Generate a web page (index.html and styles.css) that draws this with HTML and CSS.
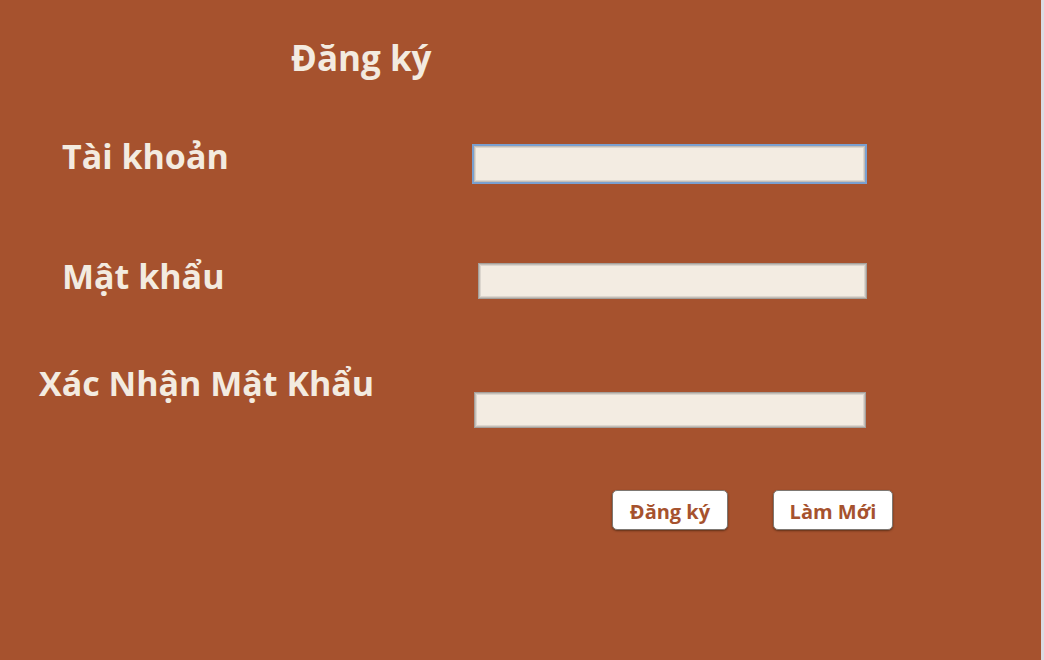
FILE: index.html
```html
<!DOCTYPE html>
<html lang="vi">
<head>
<meta charset="utf-8">
<title>Đăng ký</title>
<link rel="stylesheet" href="styles.css">
</head>
<body>
<main class="page">
  <h1 class="title">Đăng ký</h1>
  <div class="row row-user">
    <label class="label" for="user">Tài khoản</label>
    <input class="field field-focus" id="user" type="text">
  </div>
  <div class="row row-pass">
    <label class="label" for="pass">Mật khẩu</label>
    <input class="field" id="pass" type="password">
  </div>
  <div class="row row-confirm">
    <label class="label" for="confirm">Xác Nhận Mật Khẩu</label>
    <input class="field" id="confirm" type="password">
  </div>
  <div class="actions">
    <button class="btn btn-register" type="button">Đăng ký</button>
    <button class="btn btn-reset" type="button">Làm Mới</button>
  </div>
</main>
<div class="edge"></div>
</body>
</html>
```
FILE: styles.css
```css
html, body {
  margin: 0;
  padding: 0;
  height: 100%;
}
body {
  display: flex;
  background: #a6522e;
  font-family: "Open Sans", "Noto Sans", sans-serif;
  color: #f3ebe0;
}
.page {
  flex: 1;
}
.edge {
  width: 3px;
  background: #dcdce4;
}
.title {
  margin: 0;
  padding: 34px 0 0 291px;
  font-size: 35px;
  line-height: 48px;
  font-weight: 700;
}
.row {
  display: flex;
  align-items: flex-start;
}
.label {
  box-sizing: border-box;
  flex: 0 0 410px;
  width: 410px;
  font-size: 34px;
  font-weight: 700;
  line-height: 44px;
  white-space: nowrap;
}
.field {
  box-sizing: border-box;
  height: 36px;
  background: #f3ece2;
  border: 1px solid #a5a09b;
  box-shadow: inset 0 0 0 1px #c4beb7, inset 0 0 0 2px #dcd6ce;
  padding: 0 6px;
  font-size: 16px;
  outline: none;
}
.field-focus {
  height: 40px;
  border: 2px solid #7aa0d0;
  box-shadow: inset 0 0 0 1px #c4beb7, inset 0 0 0 2px #dcd6ce;
}
.row-user {
  margin-top: 62px;
}
.row-user .label {
  padding-left: 62px;
  margin-top: -10px;
}
.row-user .field {
  width: 395px;
  margin-left: 62px;
}
.row-pass {
  margin-top: 79px;
}
.row-pass .label {
  padding-left: 62px;
  margin-top: -9px;
}
.row-pass .field {
  width: 389px;
  margin-left: 68px;
}
.row-confirm {
  margin-top: 62px;
}
.row-confirm .label {
  padding-left: 39px;
}
.row-confirm .field {
  width: 392px;
  margin-left: 64px;
  margin-top: 31px;
}
.actions {
  display: flex;
  gap: 45px;
  margin: 62px 0 0 612px;
}
.btn {
  box-sizing: border-box;
  height: 40px;
  background: #ffffff;
  border: 1px solid #7d7873;
  border-radius: 5px;
  box-shadow: 0 1px 2px rgba(50, 25, 10, 0.6);
  color: #a6522e;
  font-family: "Open Sans", "Noto Sans", sans-serif;
  font-size: 20px;
  font-weight: 700;
  padding: 2px 0 0;
}
.btn-register {
  width: 116px;
}
.btn-reset {
  width: 120px;
}
```
